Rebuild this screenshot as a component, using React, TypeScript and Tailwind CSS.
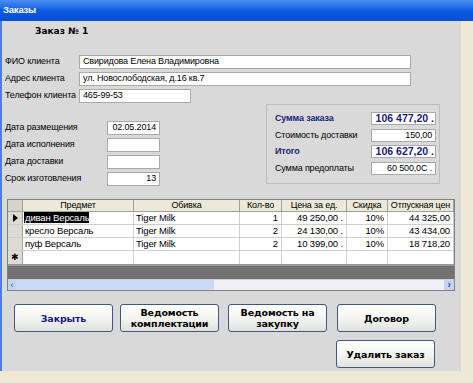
import React from "react";

const F = { fontFamily: '"Liberation Sans", Arial, sans-serif' };
const V = { fontFamily: '"DejaVu Sans", Verdana, sans-serif' };

function Input({ w, h = "h-[14px]", value, right, bold }: { w: string; h?: string; value?: string; right?: boolean; bold?: boolean }) {
  return (
    <div
      className={`${w} ${h} shrink-0 bg-white border border-[#aaaaaa] flex items-center whitespace-nowrap overflow-hidden ${right ? "justify-end" : ""} ${bold ? "font-bold text-[#1c1c7a] text-[10.5px] px-[1px] tracking-normal" : "text-black text-[9px] px-[3px]"}`}
    >
      {value}
    </div>
  );
}

function Btn({ children, navy, className = "" }: { children: React.ReactNode; navy?: boolean; className?: string }) {
  return (
    <div
      className={`w-[99px] h-[28px] shrink-0 rounded-[3px] border border-[#3b5a80] bg-gradient-to-b from-white via-[#f4f4f1] to-[#e2e1dc] flex items-center justify-center text-center text-[9.5px] leading-[11px] font-bold ${navy ? "text-[#1a1a8a]" : "text-black"} ${className}`}
      style={V}
    >
      {children}
    </div>
  );
}

const cols = [
  { w: "w-[111px]", h: "Предмет" },
  { w: "w-[106px]", h: "Обивка" },
  { w: "w-[42px]", h: "Кол-во" },
  { w: "w-[65px]", h: "Цена за ед." },
  { w: "w-[41px]", h: "Скидка" },
  { w: "w-[66px]", h: "Отпускная цен" },
];

const rows = [
  ["диван Версаль", "Tiger Milk", "1", "49 250,00 .", "10%", "44 325,00"],
  ["кресло Версаль", "Tiger Milk", "2", "24 130,00 .", "10%", "43 434,00"],
  ["пуф Версаль", "Tiger Milk", "2", "10 399,00 .", "10%", "18 718,20"],
];

export default function App() {
  return (
    <div className="w-[473px] h-[383px] overflow-hidden flex flex-col bg-[#efe8d5]" style={F}>
      {/* title bar */}
      <div className="h-[21px] shrink-0 bg-gradient-to-b from-[#4a8ff2] via-[#0b5ae0] to-[#0a4ed2] flex items-center pl-[3px]">
        <span className="text-white text-[9.5px] font-bold tracking-[-0.2px]">Заказы</span>
      </div>
      <div className="flex h-[350px] shrink-0">
        <div className="w-[2px] bg-[#4a7fe0]" />
        <div className="w-[459px] bg-[#d9d9d9] flex flex-col text-[9px] text-black tracking-[-0.15px]">
          <div className="pl-[33px] pt-[4px] h-[20px] text-[9px] font-bold tracking-normal" style={V}>
            Заказ № 1
          </div>
          {/* client */}
          <div className="mt-[14px] flex flex-col gap-[3px] pl-[3px]">
            <div className="flex items-center">
              <div className="w-[74px] whitespace-nowrap">ФИО клиента</div>
              <Input w="w-[332px]" value="Свиридова Елена Владимировна" />
            </div>
            <div className="flex items-center">
              <div className="w-[74px] whitespace-nowrap">Адрес клиента</div>
              <Input w="w-[332px]" value="ул. Новослободская, д.16 кв.7" />
            </div>
            <div className="flex items-center">
              <div className="w-[74px] whitespace-nowrap">Телефон клиента</div>
              <Input w="w-[112px]" value="465-99-53" />
            </div>
          </div>
          {/* dates + summary */}
          <div className="flex mt-[1px]">
            <div className="flex flex-col gap-[3px] pl-[3px] pt-[17px]">
              {[
                ["Дата размещения", "02.05.2014"],
                ["Дата исполнения", ""],
                ["Дата доставки", ""],
                ["Срок изготовления", "13"],
              ].map(([l, v]) => (
                <div key={l} className="flex items-center">
                  <div className="w-[102px] whitespace-nowrap">{l}</div>
                  <Input w="w-[53px]" value={v} right />
                </div>
              ))}
            </div>
            <div className="ml-[106px] w-[174px] h-[80px] border border-[#bebebe] bg-[#dadada] flex flex-col gap-[3px] pt-[7px] pl-[8px]">
              {[
                ["Сумма заказа", "106 477,20 .", true],
                ["Стоимость доставки", "150,00", false],
                ["Итого", "106 627,20 .", true],
                ["Сумма предоплаты", "60 500,0С .", false],
              ].map(([l, v, b]) => (
                <div key={l as string} className="flex items-center">
                  <div className={`w-[96px] whitespace-nowrap ${b ? "font-bold text-[#1c1c7a]" : ""}`}>{l as string}</div>
                  <Input w="w-[65px]" h="h-[13px]" value={v as string} right bold={b as boolean} />
                </div>
              ))}
            </div>
          </div>
          {/* grid */}
          <div className="ml-[5px] mt-[13px] w-[448px] h-[92px] border border-[#808080] bg-[#727272] flex flex-col overflow-hidden">
            <div className="bg-white">
              <div className="flex h-[12px] bg-[#ece9d8] border-b border-[#a0a0a0]">
                <div className="w-[15px] shrink-0 border-r border-[#a0a0a0] bg-[#d6d3ca]" />
                {cols.map((c) => (
                  <div key={c.h} className={`${c.w} shrink-0 border-r border-[#a0a0a0] text-center text-[9px] leading-[11px] whitespace-nowrap overflow-hidden`}>
                    {c.h}
                  </div>
                ))}
              </div>
              {rows.map((r, i) => (
                <div key={i} className="flex h-[13px] border-b border-[#cfcfcf]">
                  <div className="w-[15px] shrink-0 border-r border-[#a0a0a0] bg-[#dedbd2] flex items-center justify-center">
                    {i === 0 && (
                      <svg width="5" height="8" viewBox="0 0 5 8"><path d="M0 0L5 4L0 8Z" fill="#000" /></svg>
                    )}
                  </div>
                  {cols.map((c, j) => (
                    <div
                      key={j}
                      className={`${c.w} shrink-0 border-r border-[#cfcfcf] text-[9.5px] leading-[12px] whitespace-nowrap overflow-hidden ${j >= 2 ? "text-right pr-[3px]" : "pl-[2px]"}`}
                    >
                      {i === 0 && j === 0 ? (
                        <span className="bg-black text-white ml-[-1px] pl-[1px] inline-block leading-[11px]">{r[j]}</span>
                      ) : (
                        r[j]
                      )}
                    </div>
                  ))}
                </div>
              ))}
              <div className="flex h-[13px]">
                <div className="w-[15px] shrink-0 border-r border-[#a0a0a0] bg-[#dedbd2] flex items-center justify-center text-[9px] leading-[9px]">
                  ✱
                </div>
                {cols.map((c, j) => (
                  <div key={j} className={`${c.w} shrink-0 border-r border-[#cfcfcf]`} />
                ))}
              </div>
            </div>
            <div className="h-[2px] bg-[#9a9a9a]" />
            <div className="flex-1" />
            <div className="h-[11px] flex bg-[#eef0f6] border-t border-[#d0d0d0]">
              <div className="w-[8px] bg-[#c3d4f2] flex items-center justify-center text-[9px] text-[#2a4ab0] leading-[8px]">‹</div>
              <div className="w-[198px] bg-[#cbdbf6]" />
              <div className="flex-1" />
              <div className="w-[10px] bg-[#c3d4f2] flex items-center justify-center text-[10px] font-bold text-[#2a4ab8] leading-[8px]">›</div>
            </div>
          </div>
          {/* buttons */}
          <div className="flex ml-[12px] mt-[13px]">
            <Btn navy>Закрыть</Btn>
            <Btn className="ml-[7px]">
              Ведомость<br />комплектации
            </Btn>
            <Btn className="ml-[9px]">
              Ведомость на<br />закупку
            </Btn>
            <Btn className="ml-[10px]">Договор</Btn>
          </div>
          <div className="flex ml-[334px] mt-[8px]">
            <Btn>Удалить заказ</Btn>
          </div>
        </div>
        <div className="flex-1 bg-[#efe8d5]" />
      </div>
    </div>
  );
}
